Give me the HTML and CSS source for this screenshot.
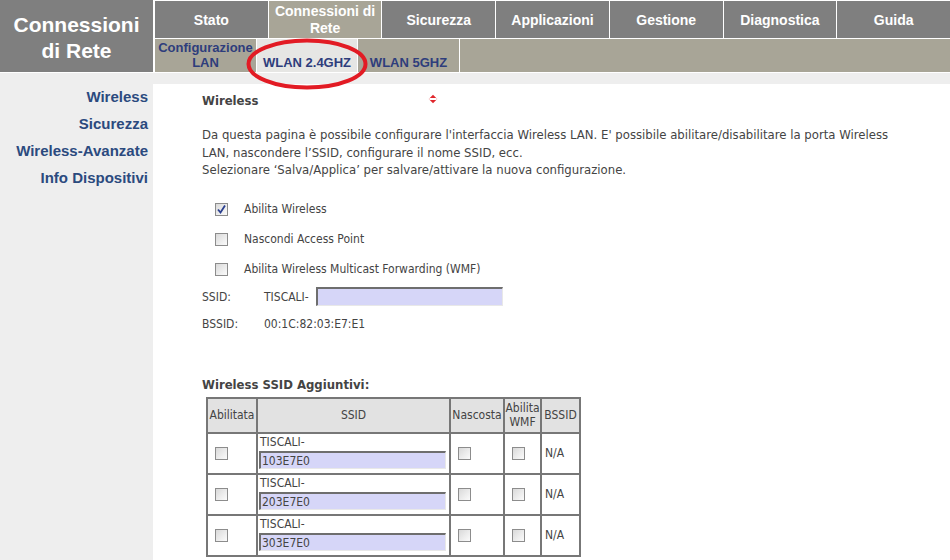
FILE: index.html
```html
<!DOCTYPE html>
<html lang="it">
<head>
<meta charset="utf-8">
<title>Connessioni di Rete - WLAN 2.4GHZ</title>
<link rel="stylesheet" href="styles.css">
</head>
<body>
<div class="header">
  <div class="logo">Connessioni<br>di Rete</div>
  <div class="navs">
    <div class="topnav">
      <div class="tab">Stato</div>
      <div class="tab active">Connessioni di<br>Rete</div>
      <div class="tab">Sicurezza</div>
      <div class="tab">Applicazioni</div>
      <div class="tab">Gestione</div>
      <div class="tab">Diagnostica</div>
      <div class="tab">Guida</div>
    </div>
    <div class="subnav">
      <div class="sub">Configurazione<br>LAN</div>
      <div class="sub active">WLAN 2.4GHZ</div>
      <div class="sub">WLAN 5GHZ</div>
      <div class="sub-end"></div>
    </div>
  </div>
  <svg class="circle" width="124" height="54" viewBox="0 0 124 54"><ellipse cx="62" cy="27" rx="58.5" ry="23.5" fill="none" stroke="#e21b24" stroke-width="4"/></svg>
</div>
<div class="body">
  <div class="side">
    <a class="slink">Wireless</a>
    <a class="slink">Sicurezza</a>
    <a class="slink">Wireless-Avanzate</a>
    <a class="slink">Info Dispositivi</a>
  </div>
  <div class="main">
    <div class="title">Wireless <span class="dot"></span></div>
    <p class="desc">Da questa pagina è possibile configurare l'interfaccia Wireless LAN. E' possibile abilitare/disabilitare la porta Wireless LAN, nascondere l’SSID, configurare il nome SSID, ecc.<br>Selezionare ‘Salva/Applica’ per salvare/attivare la nuova configurazione.</p>
    <div class="checks">
      <div class="crow"><span class="cb checked"><svg width="11" height="11" viewBox="0 0 11 11"><polyline points="2,5.5 4.5,8.5 9,1.5" fill="none" stroke="#2a3f8f" stroke-width="1.8"/></svg></span><span>Abilita Wireless</span></div>
      <div class="crow"><span class="cb"></span><span>Nascondi Access Point</span></div>
      <div class="crow"><span class="cb"></span><span>Abilita Wireless Multicast Forwarding (WMF)</span></div>
    </div>
    <div class="field"><span class="flabel">SSID:</span><span class="fpre">TISCALI-</span><span class="inp wide"></span></div>
    <div class="field bss"><span class="flabel">BSSID:</span><span>00:1C:82:03:E7:E1</span></div>
    <div class="title2">Wireless SSID Aggiuntivi:</div>
    <table class="grid">
      <colgroup>
        <col class="c1"><col class="c2"><col class="c3"><col class="c4"><col class="c5">
      </colgroup>
      <tr class="head">
        <th>Abilitata</th>
        <th>SSID</th>
        <th>Nascosta</th>
        <th>Abilita<br>WMF</th>
        <th>BSSID</th>
      </tr>
      <tr>
        <td class="ctr"><span class="cb"></span></td>
        <td class="ssid"><div>TISCALI-</div><span class="inp">103E7E0</span></td>
        <td class="ctr"><span class="cb"></span></td>
        <td class="ctr"><span class="cb"></span></td>
        <td class="na">N/A</td>
      </tr>
      <tr>
        <td class="ctr"><span class="cb"></span></td>
        <td class="ssid"><div>TISCALI-</div><span class="inp">203E7E0</span></td>
        <td class="ctr"><span class="cb"></span></td>
        <td class="ctr"><span class="cb"></span></td>
        <td class="na">N/A</td>
      </tr>
      <tr>
        <td class="ctr"><span class="cb"></span></td>
        <td class="ssid"><div>TISCALI-</div><span class="inp">303E7E0</span></td>
        <td class="ctr"><span class="cb"></span></td>
        <td class="ctr"><span class="cb"></span></td>
        <td class="na">N/A</td>
      </tr>
    </table>
  </div>
</div>
</body>
</html>
```
FILE: styles.css
```css
html, body {
  margin: 0;
  padding: 0;
  background: #ffffff;
}
body {
  width: 950px;
  height: 560px;
  overflow: hidden;
  font-family: "DejaVu Sans Condensed", "DejaVu Sans", sans-serif;
  font-size: 12px;
  color: #444;
}
.header {
  position: relative;
  display: flex;
  height: 72px;
}
.logo {
  width: 153px;
  height: 72px;
  background: #7f7f7f;
  color: #fff;
  font-family: "Liberation Sans", Arial, sans-serif;
  font-weight: bold;
  font-size: 21px;
  line-height: 26px;
  text-align: center;
  padding-top: 12px;
  box-sizing: border-box;
}
.navs {
  flex: 1;
  padding-left: 2px;
  display: flex;
  flex-direction: column;
}
.topnav {
  display: grid;
  grid-template-columns: repeat(7, 1fr);
  gap: 1px;
  padding-top: 1px;
  height: 38px;
  background: #fff;
  border-bottom: 1px solid #fff;
}
.tab {
  background: #7f7f7f;
  color: #fff;
  font-family: "Liberation Sans", Arial, sans-serif;
  font-weight: bold;
  font-size: 14px;
  display: flex;
  align-items: center;
  justify-content: center;
  text-align: center;
  line-height: 17px;
  padding-top: 1px;
}
.tab.active {
  background: #a8a597;
  align-items: flex-start;
  padding-top: 2px;
}
.subnav {
  display: flex;
  height: 33px;
  background: #fff;
  gap: 1px;
}
.sub {
  width: 101px;
  background: #a8a597;
  color: #2e3d7c;
  font-family: "Liberation Sans", Arial, sans-serif;
  font-weight: bold;
  font-size: 13px;
  line-height: 15px;
  text-align: center;
  display: flex;
  align-items: flex-end;
  justify-content: center;
  padding-bottom: 2px;
  box-sizing: border-box;
}
.sub.active {
  background: #e6e6e4;
  width: 100px;
}
.sub-end {
  flex: 1;
  background: #a8a597;
}
.circle {
  position: absolute;
  left: 245px;
  top: 37px;
}
.body {
  display: grid;
  grid-template-columns: 153px 1fr;
  background: #eeeeee;
  padding-top: 11px;
  border-top: 1px solid #fff;
  height: 476px;
}
.side {
  display: flex;
  flex-direction: column;
  align-items: flex-end;
  padding-right: 5px;
  padding-top: 4px;
  gap: 10px;
}
.slink {
  font-family: "Liberation Sans", Arial, sans-serif;
  font-weight: bold;
  font-size: 15px;
  line-height: 17px;
  color: #2b4a7e;
}
.main {
  background: #fff;
  padding-left: 49px;
  padding-top: 9px;
}
.title {
  font-weight: bold;
  font-size: 13px;
  color: #444;
  line-height: 16px;
}
.dot {
  display: inline-block;
  width: 6px;
  height: 6px;
  background: #e0262c;
  transform: rotate(45deg);
  margin-left: 167px;
  vertical-align: 3px;
  position: relative;
}
.dot::after {
  content: "";
  position: absolute;
  left: 0;
  top: 0;
  width: 6px;
  height: 6px;
  background: linear-gradient(-45deg, transparent 42%, #fff 42%, #fff 58%, transparent 58%);
}
.desc {
  margin: 17px 0 0 0;
  width: 700px;
  font-size: 13px;
  line-height: 17.5px;
  color: #444;
}
.checks {
  margin-top: 23px;
  padding-left: 13px;
  display: flex;
  flex-direction: column;
  gap: 15px;
}
.crow {
  display: flex;
  align-items: center;
  height: 15px;
  gap: 16px;
}
.cb {
  display: inline-flex;
  align-items: center;
  justify-content: center;
  width: 11px;
  height: 11px;
  border: 1px solid #8c8c8c;
  background: linear-gradient(135deg, #d9d9d9 0%, #eeeeee 60%, #fbfbfb 100%);
}
.field {
  display: flex;
  align-items: center;
  margin-top: 10px;
  height: 20px;
}
.flabel {
  width: 62px;
}
.fpre {
  width: 52px;
}
.inp {
  display: block;
  box-sizing: border-box;
  height: 19px;
  background: #d6d6f8;
  border-top: 2px solid #6e6e6e;
  border-left: 2px solid #6e6e6e;
  border-bottom: 1px solid #e8e8e8;
  border-right: 1px solid #e8e8e8;
  padding-left: 1px;
  line-height: 16px;
}
.inp.wide {
  width: 187px;
}
.bss {
  margin-top: 7px;
}
.title2 {
  margin-top: 43px;
  font-weight: bold;
  font-size: 13px;
  line-height: 16px;
  color: #444;
}
.grid {
  margin-top: 4px;
  margin-left: 4px;
  border-collapse: separate;
  border-spacing: 0;
  border: 1px solid #777;
  table-layout: fixed;
  width: 375px;
}
.c1 { width: 50px; }
.c2 { width: 193px; }
.c3 { width: 54px; }
.c4 { width: 37px; }
.c5 { width: 39px; }
.grid th, .grid td {
  border: 1px solid #777;
  padding: 0;
  font-size: 12px;
  color: #444;
  box-sizing: border-box;
  overflow: hidden;
  white-space: nowrap;
}
.grid th {
  font-weight: normal;
  background: #e2e2e2;
  height: 35px;
  line-height: 14px;
}
.grid td {
  height: 41px;
  background: #fff;
}
.ctr {
  text-align: left;
  padding-left: 7px !important;
}
.ctr .cb {
  vertical-align: middle;
}
.na {
  padding-left: 3px !important;
}
.ssid {
  vertical-align: top;
  padding: 1px 0 0 1px !important;
}
.ssid div {
  line-height: 15px;
  padding-left: 1px;
}
.ssid .inp {
  width: 187px;
  height: 18px;
  margin-top: 1px;
}
```
